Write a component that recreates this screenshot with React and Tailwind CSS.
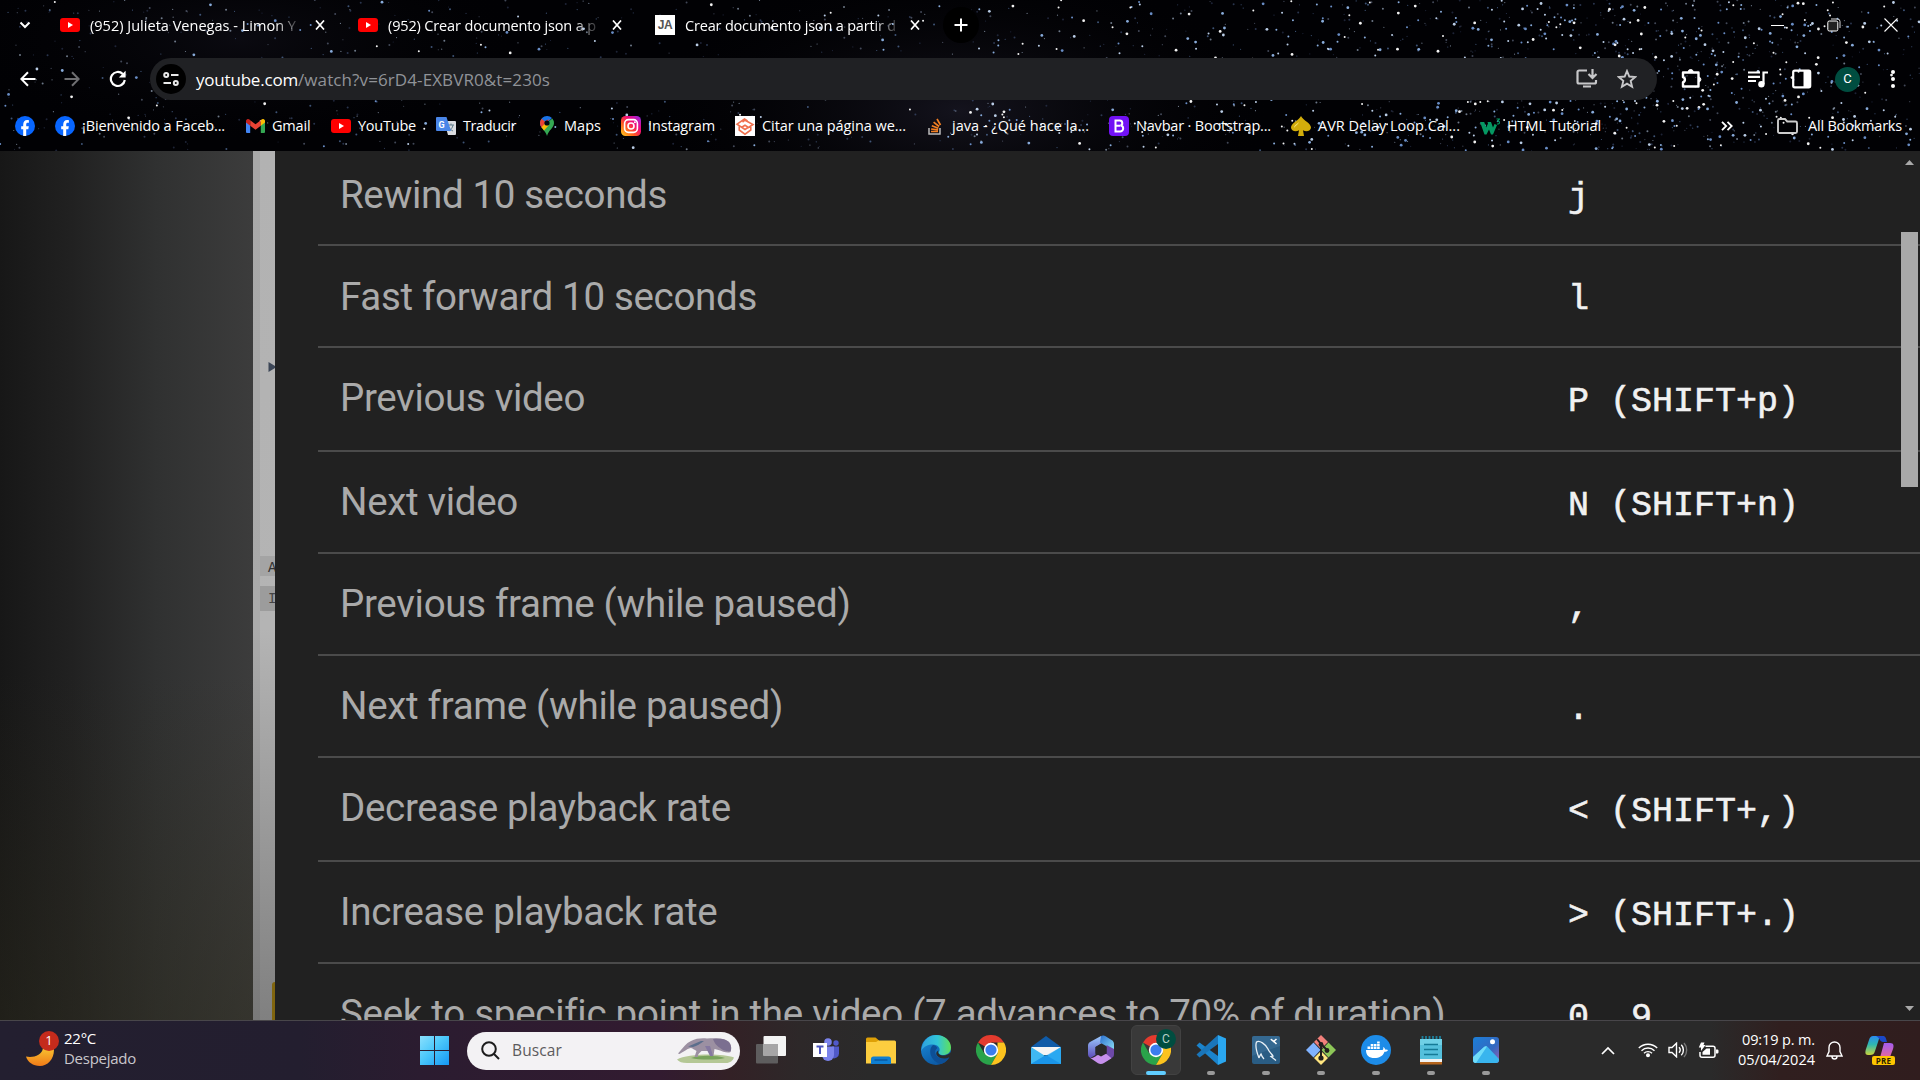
import React, { useLayoutEffect, useRef } from "react";

const UI = "font-['Open_Sans','Noto_Sans',sans-serif]";

/* Single line of text whose tracking is adjusted to fill a given width. */
function Fit({ w, className = "", children }) {
  const ref = useRef(null);
  useLayoutEffect(() => {
    const el = ref.current;
    el.style.letterSpacing = "0px";
    const natural = el.getBoundingClientRect().width;
    el.style.letterSpacing = (w - natural) / el.textContent.length + "px";
  }, [w]);
  return (
    <span ref={ref} className={"inline-block whitespace-nowrap " + className}>
      {children}
    </span>
  );
}

function makeStars() {
  let seed = 20240405;
  const rnd = () => {
    seed = (seed * 1664525 + 1013904223) % 4294967296;
    return seed / 4294967296;
  };
  const colors = ["#ffffff", "#8fb4e6", "#6f95d0", "#c4d8f2", "#4b5f88", "#34405f", "#77829a"];
  const out = [];
  for (let i = 0; i < 2100; i++) {
    let x = rnd() * 1920;
    const y = rnd() * 151;
    if (i < 480) x = 1640 + (rnd() + rnd() + rnd() - 1.5) * 260;
    else if (i < 900) x = 960 + rnd() * 960;
    if (x > 1920 || x < 0) continue;
    const t = rnd();
    const bright = x > 960 ? t < 0.42 : t < 0.16;
    const s = bright ? (rnd() < 0.4 ? 2.8 : 2) : rnd() < 0.4 ? 2 : 1.2;
    const c = bright ? colors[Math.floor(rnd() * 4)] : colors[2 + Math.floor(rnd() * 5)];
    out.push([x, y, s, c, bright ? 0.95 : 0.55]);
  }
  return out;
}
const STARS = makeStars();

function Sky() {
  return (
    <svg className="absolute inset-0 h-full w-full" viewBox="0 0 1920 151" preserveAspectRatio="none">
      <defs>
        <radialGradient id="neb">
          <stop offset="0" stopColor="#14131d" />
          <stop offset="1" stopColor="#000" stopOpacity="0" />
        </radialGradient>
      </defs>
      <rect width="1920" height="151" fill="#010104" />
      <ellipse cx="960" cy="110" rx="330" ry="150" fill="url(#neb)" />
      <ellipse cx="240" cy="40" rx="300" ry="110" fill="url(#neb)" opacity="0.5" />
      {STARS.map(([x, y, s, c, o], i) => (
        <ellipse key={i} cx={x} cy={y} rx={s / 2} ry={s / 2} fill={c} opacity={o} />
      ))}
    </svg>
  );
}

const YouTube = () => (
  <svg width="20" height="14" viewBox="0 0 20 14" className="shrink-0">
    <rect width="20" height="14" rx="3" fill="#f00" />
    <path d="M8 4v6l5-3z" fill="#fff" />
  </svg>
);
const CloseX = () => (
  <svg width="10" height="10" viewBox="0 0 10 10" className="shrink-0">
    <path d="M1 0.500l8 9M9 0.500L1 9.500" stroke="#fff" strokeWidth="1.700" />
  </svg>
);

const TABS = [
  { icon: <YouTube />, title: "(952) Julieta Venegas - Limon Y", w: 207, tw: 206, gap: 18, cell: 298 },
  { icon: <YouTube />, title: "(952) Crear documento json a p", w: 208, tw: 208, gap: 16, cell: 297 },
  {
    icon: (
      <span className="flex h-5 w-5 shrink-0 items-center justify-center bg-white font-['Liberation_Sans',sans-serif] text-[12px] font-bold tracking-tight text-[#555]">JA</span>
    ),
    title: "Crear documento json a partir d", w: 211, tw: 211, gap: 14, cell: 280,
  },
];

function TabStrip() {
  return (
    <div className={"flex h-[50px] items-center text-[14.5px] text-white " + UI}>
      <svg width="12" height="8" viewBox="0 0 12 8" className="ml-[19px] shrink-0">
        <path d="M1.5 1.5L6 6l4.500-4.500" fill="none" stroke="#fff" strokeWidth="2" />
      </svg>
      <div className="flex pl-[29px]">
        {TABS.map((t) => (
          <div key={t.title} className="flex items-center" style={{ width: t.cell }}>
            {t.icon}
            <div className="ml-[10px] shrink-0 overflow-hidden pt-px [mask-image:linear-gradient(to_right,#000_89%,rgba(0,0,0,0.2)_100%)]" style={{ width: t.w }}>
              <Fit w={t.tw}>{t.title}</Fit>
            </div>
            <span className="flex" style={{ marginLeft: t.gap }}><CloseX /></span>
          </div>
        ))}
      </div>
      <div className="ml-[8px] flex h-9 w-9 items-center justify-center rounded-full bg-black">
        <svg width="14" height="14" viewBox="0 0 14 14"><path d="M7 0.500v13M0.500 7h13" stroke="#fff" strokeWidth="2" /></svg>
      </div>
      <div className="ml-auto flex items-center pr-[22px]">
        <svg width="13" height="13" viewBox="0 0 13 13"><path d="M0 6.500h13" stroke="#fff" /></svg>
        <svg width="14" height="14" viewBox="0 0 14 14" className="ml-[43px]">
          <path d="M4 1h6.500a2.500 2.500 0 0 1 2.500 2.500V10" fill="none" stroke="#ddd" />
          <rect x="0.800" y="3" width="10" height="10" rx="1.500" fill="#222" stroke="#fff" />
        </svg>
        <svg width="14" height="14" viewBox="0 0 14 14" className="ml-[43px]"><path d="M0.500 0.500l13 13M13.500 0.500l-13 13" stroke="#fff" strokeWidth="1.100" /></svg>
      </div>
    </div>
  );
}

function Toolbar() {
  return (
    <div className="flex h-[58px] items-center">
      <svg width="16" height="16" viewBox="0 0 16 16" className="ml-5 shrink-0"><path d="M15.500 8H1.500M8 1.200L1.300 8 8 14.800" fill="none" stroke="#fff" strokeWidth="2" /></svg>
      <svg width="16" height="16" viewBox="0 0 16 16" className="ml-[28px] shrink-0"><path d="M0.500 8h14M8 1.200L14.700 8 8 14.800" fill="none" stroke="#6f6f72" strokeWidth="2" /></svg>
      <svg width="18" height="18" viewBox="0 0 18 18" className="ml-[29px] shrink-0">
        <path d="M15.800 10a7 7 0 1 1-2-6" fill="none" stroke="#fff" strokeWidth="2.200" />
        <path d="M16.600 0.800v6.800H9.800z" fill="#fff" />
      </svg>
      <div className="ml-[23px] flex h-[42px] w-[1507px] items-center rounded-full bg-[#202124]">
        <div className="ml-[6px] flex h-[30px] w-[30px] items-center justify-center rounded-full bg-black">
          <svg width="16" height="14" viewBox="0 0 16 14" fill="none" stroke="#e8e8e8" strokeWidth="2">
            <circle cx="3.200" cy="3" r="2" /><path d="M8 3h7.500M0.500 11H8" /><circle cx="12.800" cy="11" r="2" />
          </svg>
        </div>
        <div className={"ml-[10px] w-[360px] pt-[2px] whitespace-nowrap text-[17px] leading-[22px] text-[#909398] " + UI}>
          <Fit w={102} className="text-white">youtube.com</Fit>
          <Fit w={252}>/watch?v=6rD4-EXBVR0&amp;t=230s</Fit>
        </div>
        <svg width="22" height="20" viewBox="0 0 22 20" className="ml-auto shrink-0" fill="none" stroke="#c7c7c9" strokeWidth="2.200">
          <path d="M11 1.500H3a1.500 1.500 0 0 0-1.500 1.500v10A1.500 1.500 0 0 0 3 14.500h15.500a1.500 1.500 0 0 0 1.500-1.500v-2M7 17.500h8M16.500 0v8M12.500 5l4 4 4-4" />
        </svg>
        <svg width="20" height="20" viewBox="0 0 20 20" className="ml-[19px] mr-[20px] shrink-0" fill="none" stroke="#c7c7c9" strokeWidth="1.900">
          <path d="M10 2l2.300 5.500 5.900.5-4.500 3.900 1.400 5.800L10 14.600l-5.100 3.100 1.400-5.800L1.800 8l5.900-.5z" />
        </svg>
      </div>
      <svg width="22" height="22" viewBox="0 0 22 22" className="ml-[23px] shrink-0">
        <path d="M3 4.500h15.500v14H3v-4.300a2.600 2.600 0 0 0 0-5z" fill="none" stroke="#fff" strokeWidth="2.400" strokeLinejoin="round" />
        <path d="M8.200 4a2.500 2.500 0 0 1 5 0zM19 9a2.600 2.600 0 0 1 0 5z" fill="#fff" stroke="#fff" />
      </svg>
      <svg width="20" height="17" viewBox="0 0 20 17" className="ml-[46px] shrink-0">
        <path d="M0 1.500h12M0 5.800h12M0 10h8" stroke="#fff" strokeWidth="2.200" />
        <path d="M15.500 13V1.500H20" fill="none" stroke="#fff" strokeWidth="2.200" /><circle cx="13.400" cy="13.300" r="3.200" fill="#fff" />
      </svg>
      <svg width="20" height="20" viewBox="0 0 20 20" className="ml-[24px] shrink-0">
        <rect x="1.200" y="1.700" width="17" height="16.600" rx="1.500" fill="none" stroke="#fff" strokeWidth="2.200" /><path d="M11.500 1.500h7v17h-7z" fill="#fff" />
      </svg>
      <div className="ml-[23px] flex h-[25px] w-[25px] items-center justify-center rounded-full bg-[#004d40] font-[Roboto] text-[13px] text-white">C</div>
      <svg width="4" height="18" viewBox="0 0 4 18" className="ml-[31px] shrink-0" fill="#fff"><circle cx="2" cy="2" r="2" /><circle cx="2" cy="9" r="2" /><circle cx="2" cy="16" r="2" /></svg>
    </div>
  );
}

const Facebook = () => (
  <svg width="20" height="20" viewBox="0 0 20 20"><circle cx="10" cy="10" r="10" fill="#0866ff" /><path d="M8.200 20v-6.700H6.200v-3h2V8.700C8.200 5.600 9.800 4 12 4c.8 0 1.400.1 1.900.2v2.600h-1.200c-1.100 0-1.500.6-1.500 1.700v1.800h2.600l-.5 3h-2.100V20z" fill="#fff" /></svg>
);
const Gmail = () => (
  <svg width="19" height="14" viewBox="0 0 19 14"><path d="M0 2v11a1 1 0 0 0 1 1h3.200V5z" fill="#4285f4" /><path d="M19 2v11a1 1 0 0 1-1 1h-3.200V5z" fill="#34a853" /><path d="M14.800 1.200L9.500 5.200 4.200 1.200v5.600l5.300 4 5.300-4z" fill="#ea4335" /><path d="M0 2C0 .3 2 -.6 3.300.4l.9.700v5.700L0 3.600z" fill="#c5221f" /><path d="M19 2c0-1.700-2-2.600-3.300-1.600l-.9.700v5.700L19 3.600z" fill="#fbbc04" /></svg>
);
const Translate = () => (
  <svg width="20" height="20" viewBox="0 0 20 20"><path d="M8 5h11a1 1 0 0 1 1 1v12a1 1 0 0 1-1 1h-7z" fill="#dadce0" /><path d="M12 9h6M15 7.500V9m2 0c-.5 3-2 4.500-4 6m0-4c.8 2 2.500 3.400 4 4" stroke="#607d8b" fill="none" /><path d="M1 1h9.500l4.500 14H1a1 1 0 0 1-1-1V2a1 1 0 0 1 1-1z" fill="#4a86e8" /><text x="2.500" y="11.500" fontSize="9" fontWeight="700" fill="#fff" fontFamily="Roboto">G</text></svg>
);
const MapPin = () => (
  <svg width="14" height="20" viewBox="0 0 14 20"><path d="M7 0a7 7 0 0 0-7 7c0 2 .8 3.500 2 5l10-10A7 7 0 0 0 7 0z" fill="#1a73e8" /><path d="M0 7c0 2 .8 3.500 2 5l7.600-9L4.700 5.300 1.600 2.700A7 7 0 0 0 0 7z" fill="#ea4335" /><path d="M2 12l2.700-3.200L12.300 2.500A7 7 0 0 1 14 7c0 5-5.500 7-7 13-.5-3-3-5-5-8z" fill="#34a853" /><path d="M1.500 11.300L5 7.500l4 1.500-5 5.600z" fill="#fbbc04" /><circle cx="7" cy="7" r="2.600" fill="#000814" /></svg>
);
const Insta = () => (
  <svg width="20" height="20" viewBox="0 0 20 20"><defs><linearGradient id="ig" x1="0" y1="1" x2="1" y2="0"><stop offset="0" stopColor="#ffd521" /><stop offset=".35" stopColor="#ff5a1f" /><stop offset=".65" stopColor="#f0077c" /><stop offset="1" stopColor="#8a2ff5" /></linearGradient></defs><rect width="20" height="20" rx="4.500" fill="url(#ig)" /><rect x="3.600" y="3.600" width="12.800" height="12.800" rx="3.800" fill="none" stroke="#fff" strokeWidth="1.600" /><circle cx="10" cy="10" r="3" fill="none" stroke="#fff" strokeWidth="1.600" /><circle cx="13.900" cy="6.200" r="1" fill="#fff" /></svg>
);
const Scribbr = () => (
  <svg width="20" height="20" viewBox="0 0 20 20"><rect width="20" height="20" fill="#fff" /><path d="M7.500 6L10 4.200 18 8.500 13.500 11.500 10 9.300 6.800 11.300M12.500 5L9.500 3 2 8.200 10 13.500 13 11.500M4.200 10.500V14L10 18.200 15.800 14V11" fill="none" stroke="#f0714f" strokeWidth="1.600" /></svg>
);
const StackO = () => (
  <svg width="15" height="18" viewBox="0 0 15 18"><path d="M1 11v6h11v-6" fill="none" stroke="#bcbbbb" strokeWidth="1.500" /><path d="M3 14.500h7M3.100 12l7 .9M3.800 8.800l6.600 2.500M5.600 5.200l5.500 4.300M9 2l3.500 6" stroke="#f48024" strokeWidth="1.700" /></svg>
);
const Boot = () => (
  <svg width="20" height="20" viewBox="0 0 20 20"><rect width="20" height="20" rx="4" fill="#7211f5" /><path d="M6.500 4.500h4.300a2.600 2.600 0 0 1 .6 5.100 2.900 2.900 0 0 1-.4 5.900H6.500zM6.500 9.700h4.500" fill="none" stroke="#fff" strokeWidth="2" /></svg>
);
const Spade = () => (
  <svg width="20" height="20" viewBox="0 0 20 20"><path d="M10 0c2 4.500 10 7 10 11.500 0 3.500-5 5-8 2.700L13 20H7l1-5.800C5 16.500 0 15 0 11.500 0 7 8 4.500 10 0z" fill="#d3ad0b" /><path d="M8 6c-3 2.500-5 3.500-5 6 2-3 4-3 5-6z" fill="#f6e37a" /></svg>
);
const W3 = () => (
  <svg width="20" height="17" viewBox="0 0 20 17"><path d="M0 4h4.200l2 5.500L8 5.500 7.500 4H11l2 5.500L14.500 6l2.500 1-4 9.500h-2L9 11.500 6.500 16.500h-2z" fill="#059862" /><path d="M16.500 1h3l-1.700 2c2.500 0 2.500 3.500-.8 3" fill="none" stroke="#059862" strokeWidth="1.100" /></svg>
);

const MARKS = [
  { icon: <Facebook />, cell: 40, iw: 20 },
  { icon: <Facebook />, text: "¡Bienvenido a Faceb...", cell: 191, iw: 20, tw: 143 },
  { icon: <Gmail />, text: "Gmail", cell: 85, iw: 19, tw: 38.500 },
  { icon: <YouTube />, text: "YouTube", cell: 105, iw: 20, tw: 58 },
  { icon: <Translate />, text: "Traducir", cell: 101, iw: 20, tw: 53 },
  { icon: <MapPin />, text: "Maps", cell: 84, iw: 20, tw: 37 },
  { icon: <Insta />, text: "Instagram", cell: 114, iw: 20, tw: 67 },
  { icon: <Scribbr />, text: "Citar una página we...", cell: 190, iw: 20, tw: 144 },
  { icon: <StackO />, text: "java - ¿Qué hace la...", cell: 184, iw: 20, tw: 137 },
  { icon: <Boot />, text: "Navbar · Bootstrap...", cell: 182, iw: 20, tw: 135 },
  { icon: <Spade />, text: "AVR Delay Loop Cal...", cell: 189, iw: 20, tw: 142 },
  { icon: <W3 />, text: "HTML Tutorial", cell: 160, iw: 20, tw: 94 },
];

function Bookmarks() {
  return (
    <div className={"flex h-[36px] items-center pl-[15px] text-[14.5px] text-white " + UI}>
      {MARKS.map((m, i) => (
        <div key={i} className="flex shrink-0 items-center" style={{ width: m.cell }}>
          <span className="flex shrink-0 justify-center" style={{ width: m.iw }}>{m.icon}</span>
          {m.text && <Fit w={m.tw} className="ml-[7px]">{m.text}</Fit>}
        </div>
      ))}
      <div className="ml-auto flex items-center pr-[18px]">
        <svg width="12" height="10" viewBox="0 0 12 10" className="mr-[44px]"><path d="M1 .8L5.200 5 1 9.200M6.500.8L10.700 5 6.500 9.200" fill="none" stroke="#fff" strokeWidth="1.800" /></svg>
        <svg width="21" height="16" viewBox="0 0 21 16" className="mr-[10px]"><path d="M1 2.500A1.500 1.500 0 0 1 2.500 1H8l2.200 2.500h8.300A1.500 1.500 0 0 1 20 5v8.500a1.500 1.500 0 0 1-1.500 1.500h-16A1.500 1.500 0 0 1 1 13.500z" fill="none" stroke="#ccc" strokeWidth="1.900" /></svg>
        <Fit w={94}>All Bookmarks</Fit>
      </div>
    </div>
  );
}

const ROWS = [
  ["Rewind 10 seconds", "j", 327, "h-[95px] pt-[22px]", "pt-[3px]"],
  ["Fast forward 10 seconds", "l", 417, "h-[102px] pt-[29px]", "pt-[3px]"],
  ["Previous video", "P (SHIFT+p)", 245, "h-[104px] pt-[28px]", "pt-[4px]"],
  ["Next video", "N (SHIFT+n)", 178, "h-[102px] pt-[28px]", "pt-[4px]"],
  ["Previous frame (while paused)", ",", 510.5, "h-[102px] pt-[28px]", "pt-[4px]"],
  ["Next frame (while paused)", ".", 443, "h-[102px] pt-[28px]", "pt-[4px]"],
  ["Decrease playback rate", "< (SHIFT+,)", 391, "h-[104px] pt-[28px]", "pt-[4px]"],
  ["Increase playback rate", "> (SHIFT+.)", 377.5, "h-[102px] pt-[28px]", "pt-[4px]"],
  ["Seek to specific point in the video (7 advances to 70% of duration)", "0..9", 1104, "h-[102px] pt-[28px]", "pt-[4px]"],
];

function Shortcuts() {
  return (
    <div className="flex min-w-0 grow flex-col bg-[#212121] pl-[43px]">
      {ROWS.map(([label, key, w, rowClass, keyClass], i) => (
        <div key={label} className={"flex shrink-0 items-start " + rowClass + (i < 8 ? " border-b-2 border-[#4b4b4b]" : "")}>
          <div className="w-[1250px] shrink-0 pl-[22px] font-[Roboto,sans-serif] text-[38.500px] leading-[44px] text-[#aaa]">
            <Fit w={w}>{label}</Fit>
          </div>
          <div className={"font-['Liberation_Mono',monospace] text-[35px] leading-[44px] whitespace-pre text-[#f1f1f1] [-webkit-text-stroke:0.600px_#f1f1f1] " + keyClass}>
            {key}
          </div>
        </div>
      ))}
    </div>
  );
}

function Page() {
  return (
    <div className="relative flex h-[869px] overflow-hidden">
      <div className="w-[253px] shrink-0 bg-[linear-gradient(to_bottom,rgba(52,50,34,0)_60%,rgba(44,42,28,0.450)_100%),linear-gradient(to_right,#171717,#212121_28%,#303131_62%,#3c3c3c)]" />
      <div className="relative w-[22px] shrink-0 overflow-hidden bg-[linear-gradient(to_bottom,#b2b2b2,#b4b4b4_55%,#808080_100%)]">
        <div className="h-full w-[7px] bg-black/5" />
        <svg className="absolute top-[210px] left-[15px]" width="7" height="12"><path d="M0.500 1v10L7 7V5z" fill="#3c4657" /></svg>
        <div className="absolute top-[405px] left-[7px] h-5 w-[15px] overflow-hidden bg-[#a4a4a4] pl-2 font-['Liberation_Mono',monospace] text-[14px] leading-[24px] text-[#333]">A</div>
        <div className="absolute top-[435px] left-[7px] h-[25px] w-[15px] overflow-hidden bg-[#9c9c9c] pl-2 font-['Liberation_Mono',monospace] text-[14px] leading-[27px] text-[#444]">I</div>
        <div className="absolute bottom-0 left-[19px] h-[38px] w-[3px] rounded-tl bg-[#80650f]" />
      </div>
      <Shortcuts />
      <div className="absolute inset-y-0 right-[2px] flex w-[17px] flex-col items-center">
        <svg width="9" height="5" viewBox="0 0 9 5" className="mt-[9px]"><path d="M0 5L4.500 0 9 5z" fill="#a9a9a9" /></svg>
        <div className="mt-[67px] h-[255px] w-[17px] bg-[#a9a9a9]" />
        <svg width="9" height="5" viewBox="0 0 9 5" className="mt-auto mb-[9px]"><path d="M0 0l4.500 5L9 0z" fill="#a9a9a9" /></svg>
      </div>
    </div>
  );
}

/* ---------- taskbar ---------- */
const Chrome = () => (
  <svg width="30" height="30" viewBox="0 0 30 30">
    <path d="M15 15L2 7.500A15 15 0 0 1 28 7.500H15z" fill="#e33b2e" />
    <path d="M2 7.500a15 15 0 0 0 13 22.500l6.500-11.300L15 15 8.500 18.700z" fill="#2aa34a" />
    <path d="M28 7.500A15 15 0 0 1 15 30l6.500-11.200V7.500z" fill="#fcc31e" />
    <circle cx="15" cy="15" r="7.200" fill="#fff" /><circle cx="15" cy="15" r="5.600" fill="#3b7ded" />
  </svg>
);
const Edge = () => (
  <svg width="30" height="30" viewBox="0 0 30 30">
    <defs><linearGradient id="e1" x1="0" x2="1"><stop offset="0" stopColor="#2f9fe0" /><stop offset=".55" stopColor="#31c5d8" /><stop offset="1" stopColor="#5fe05a" /></linearGradient><linearGradient id="e2" x1="0" y1="0" x2="0.500" y2="1"><stop offset="0" stopColor="#1b8fdc" /><stop offset="1" stopColor="#0c59a4" /></linearGradient></defs>
    <circle cx="15" cy="15" r="15" fill="url(#e2)" />
    <path d="M1 12C3 4 9 0 15 0c9 0 15 6 15 12.500 0 5-4 7.500-8 7.500-3 0-5-1.500-4-3 2-3-.5-7.500-6-7.500C7 9.500 3 11 0 16z" fill="url(#e1)" />
    <path d="M12 10c-4 3-5 14 7 19 5-1 8-4 9.500-7-5 3-12 2-14-3-1-3 .5-5 2-6-1-2-3-3-4.500-3z" fill="#0d4f96" />
    <path d="M17.500 15.500c-1.500 2.500 1 5 5 5 3.500 0 6-1.500 8-4v6.500l-2-1c-4 2.500-10 2-12.500-1.500-1.500-2-.5-4 1.500-5z" fill="#2b2b2b" />
  </svg>
);
const Mail = () => (
  <svg width="30" height="28" viewBox="0 0 30 28"><path d="M0 11L15 0l15 11z" fill="#0f5ba8" /><path d="M0 11h30l-8 8H8z" fill="#f4f4f4" /><path d="M0 11l15 9.500L30 11v17H0z" fill="#3fb8f2" /><path d="M0 28l15-9L30 28z" fill="#1c8fe0" /><path d="M0 28L30 11v17z" fill="#1a9af0" opacity=".55" /></svg>
);
const M365 = () => (
  <svg width="28" height="30" viewBox="0 0 28 30"><defs><linearGradient id="m1" x1="0" y1="0" x2="0" y2="1"><stop offset="0" stopColor="#9ccbff" /><stop offset="1" stopColor="#5c4bb8" /></linearGradient><linearGradient id="m2" x1="0" y1="0" x2="1" y2="1"><stop offset="0" stopColor="#2a6fd0" /><stop offset="1" stopColor="#8de0f5" /></linearGradient></defs>
    <path d="M14 1L3 7C1.500 8 1 9 1 11v8c0 2 .8 3 2.500 4l5-3V12l8-5z" fill="url(#m1)" />
    <path d="M14 1c2-1 3-.5 5 .5l5.500 3.500c2 1 2.500 2.500 2.500 4.500v6l-7-4-7-4z" fill="url(#m2)" />
    <path d="M27 14v5c0 2-.5 3-2.500 4L19 26.500l-6-3.500 6.500-4v-9z" fill="#6d49a8" />
    <path d="M3 22.700c2.500 1 5-1 7-2.500l9-1.500 5.500 4.500-7.500 4.800c-2 1.300-4 1.300-6 .3z" fill="#c690ec" />
    <path d="M14 9l5.500 3v6.500L14 21.500 8.500 18.500V12z" fill="#292929" />
  </svg>
);
const VSCode = () => (
  <svg width="30" height="30" viewBox="0 0 30 30"><path d="M22 30L.5 10.500l3-3L22 21z" fill="#1b84cc" /><path d="M22 0L.5 19.500l3 3L22 9z" fill="#1a76ba" /><path d="M22 0l8 3.500v23L22 30z" fill="#2aa7f0" /></svg>
);
const MySQL = () => (
  <svg width="28" height="28" viewBox="0 0 28 28"><rect width="28" height="28" rx="2" fill="#2a5d84" /><path d="M0 2a2 2 0 0 1 2-2h24a2 2 0 0 1 2 2v8L0 20z" fill="#3e7299" opacity=".6" /><path d="M7 22C5 17 3 10 4.500 6c3-2 9 2 11.500 7 1 3 4 5 5 7l-2 .5 5 4M7 22c1-2 1-3 2-4 1 3 2 4 3 5" fill="none" stroke="#e8f0f6" strokeWidth="1.300" /><path d="M19 3c1 2 2 1.500 3 2.500l2.500 2.500M21 6l3.500-3" stroke="#fff" strokeWidth="1.600" fill="none" /></svg>
);
const Git = () => (
  <svg width="30" height="30" viewBox="0 0 30 30"><path d="M15 0l7 7-7 7-7-7z" fill="#f1807b" /><path d="M7.500 7.500l7 7.500-7 7.500L0 15z" fill="#80b3ff" /><path d="M22.500 7.500L30 15l-7.500 7.500-7-7.500z" fill="#8dc658" /><path d="M15 16l7 7-7 7-7-7z" fill="#ffe680" /><path d="M11 4l4 5v14M15 9l6 6" stroke="#221f1f" strokeWidth="2" fill="none" /><circle cx="15" cy="9.500" r="2.400" fill="#221f1f" /><circle cx="21" cy="15.500" r="2.400" fill="#221f1f" /><circle cx="15" cy="23" r="2.600" fill="#221f1f" /></svg>
);
const Docker = () => (
  <svg width="30" height="30" viewBox="0 0 30 30"><circle cx="15" cy="15" r="15" fill="#1d8ce8" /><path d="M5 15h16.500c1-.5 1-2 .5-3 1.500.5 2 1.500 2 2.500 1.500-.3 2.500 0 3 .5-.7 1.500-2 1.800-3.500 1.800C22 21.500 18 23 13.500 23 8 23 5 20.500 5 15z" fill="#fff" /><g fill="#fff"><path d="M6.500 11.500h2.600V14H6.500zM9.700 11.500h2.600V14H9.700zM12.900 11.500h2.600V14h-2.600zM16.100 11.500h2.600V14h-2.600zM9.700 9h2.600v2H9.700zM12.900 9h2.600v2h-2.600zM16.100 9h2.600v2h-2.600zM16.100 6.500h2.600v2h-2.600z" /></g></svg>
);
const Notepad = () => (
  <svg width="22" height="30" viewBox="0 0 22 30"><path d="M0 4h22v20H0z" fill="#55c0dc" /><path d="M0 4h22v6H0z" fill="#6fd0e6" /><path d="M0 24h22v3H0z" fill="#f2f2f2" /><path d="M0 27h22v2.500H0z" fill="#b5651d" /><path d="M2.500 1v3M6 1v3M9.500 1v3M13 1v3M16.500 1v3M20 1v3" stroke="#1b7e9b" strokeWidth="1.800" /><path d="M4 9.500h14M4 14.500h14M4 19.500h14" stroke="#157a96" strokeWidth="1.500" /></svg>
);
const Photos = () => (
  <svg width="26" height="26" viewBox="0 0 26 26"><defs><linearGradient id="p1" x1="0" y1="0" x2="1" y2="1"><stop offset="0" stopColor="#1b7fd8" /><stop offset=".6" stopColor="#3468c0" /><stop offset="1" stopColor="#9a5fb0" /></linearGradient></defs><rect width="26" height="26" rx="3" fill="url(#p1)" /><path d="M0 20L11 10c1.200-1 2.500-1 3.700 0L26 22v1a3 3 0 0 1-3 3H3a3 3 0 0 1-3-3z" fill="#39b5ee" /><path d="M0 20L11 10c1-1 2-1 3-.5L3 26c-2 0-3-1-3-3z" fill="#6fdcfa" /><circle cx="19.500" cy="4.800" r="2.500" fill="#fff" /></svg>
);
const TaskView = () => (
  <svg width="30" height="28" viewBox="0 0 30 28"><rect y="8" width="22" height="19.500" rx="1" fill="#5e5d5e" /><rect x="7.500" width="22.500" height="20" rx="1" fill="#f3f3f3" /><rect x="7.500" y="8" width="14.500" height="12" fill="#a6a5a6" /></svg>
);
const Teams = () => (
  <svg width="27" height="24" viewBox="0 0 27 24"><circle cx="15" cy="4" r="3.800" fill="#7b83eb" /><circle cx="23" cy="5" r="2.700" fill="#5059c9" /><path d="M19 8.500h7v7a5 5 0 0 1-7 4.500z" fill="#5059c9" /><path d="M9 8.500h12V17a6 6 0 0 1-12 0z" fill="#7b83eb" /><rect y="5" width="14" height="14" fill="#fff" /><path d="M3.500 8.500h7M7 8.500V16" stroke="#4b53bc" strokeWidth="2" /></svg>
);
const Folder = () => (
  <svg width="30" height="27" viewBox="0 0 30 27"><path d="M0 2a1.500 1.500 0 0 1 1.500-1.500h8L13 3.500h0V8H0z" fill="#dea006" /><path d="M0 5h10l2.500-1.500H28.500A1.500 1.500 0 0 1 30 5v21.500H0z" fill="#fccd3f" /><path d="M5 27v-5a2.500 2.500 0 0 1 2.500-2.500h15A2.500 2.500 0 0 1 25 22v5z" fill="#0f7fd2" /><path d="M8.500 23h13" stroke="#0a4f93" strokeWidth="1.200" /></svg>
);
const Windows = () => (
  <svg width="29" height="29" viewBox="0 0 29 29"><defs><linearGradient id="w1" x1="0" y1="0" x2="1" y2="1"><stop offset="0" stopColor="#8be0fd" /><stop offset=".45" stopColor="#4cc8fb" /><stop offset="1" stopColor="#1597f4" /></linearGradient></defs><path d="M0 0h14v14H0zM15 0h14v14H15zM0 15h14v14H0zM15 15h14v14H15z" fill="url(#w1)" /></svg>
);
const Anteater = () => (
  <svg width="57" height="25" viewBox="0 0 57 25"><path d="M0 21.500C10 15.500 45 15 57 19.500c-1 3-4 5.500-8 5.500H10C5 25 2 24 0 21.500z" fill="#b4c795" /><path d="M14 20c8-3 26-3 34 0-8 2-26 2-34 0z" fill="#5f9445" opacity=".7" /><path d="M1 15.500C6 10 9 5 14 3c5-2.500 10-3 16-2.500 10-1 20 0 22.500 4 2 3 2 7 1 9.500-3 1.500-8-.5-12-2l-4-1-1 7h-3l-2-5-7 0-3 3-1 3h-3l2-6c-2-1-4-3-6-3-4 1-7 4-11 6z" fill="#9c90a2" /><path d="M36 1c8-1 14 0 16.500 4 2 3 2 6 1 8.500-1-.5-2 .5-3-.5-1 .5-2-.5-3-.500-1 0-2-1-3-1.500-5-3-7-6-8.500-10z" fill="#7b6f90" /><path d="M11 8.500L24 3l3 0c-4 3-7 5-11 6z" fill="#5b6e8c" /><path d="M28 8l5 0 3 10h-3z" fill="#8578a0" /></svg>
);

const APPS = [
  { el: <TaskView /> }, { el: <Teams /> }, { el: <Folder /> }, { el: <Edge /> }, { el: <Chrome /> }, { el: <Mail /> }, { el: <M365 /> },
  { el: <Chrome />, active: true }, { el: <VSCode />, run: true }, { el: <MySQL />, run: true }, { el: <Git />, run: true },
  { el: <Docker />, run: true }, { el: <Notepad />, run: true }, { el: <Photos />, run: true },
];

function Taskbar() {
  return (
    <div className={"flex h-[60px] items-center border-t border-[#48464a] bg-[linear-gradient(to_right,#231f30_0px,#231e2f_300px,#2b1c30_420px,#321b30_660px,#332126_730px,#2d2829_800px,#2a2a2a_870px,#2a2a2a_1710px,#301f1f_1780px,#301d1e_1920px)] " + UI}>
      <div className="flex w-[393px] shrink-0 items-center pb-[5px] pl-[26px]">
        <div className="relative h-[35px] w-[34px]">
          <svg width="28" height="18" viewBox="0 0 28 18" className="absolute bottom-0 left-0"><defs><linearGradient id="mo" x1="0" y1="0" x2="0" y2="1"><stop offset="0" stopColor="#f8c330" /><stop offset="1" stopColor="#f07a18" /></linearGradient></defs><path d="M0 8.500c7 1.500 16-1 17-8.500h10.800C29 10 22 18 14 18 7 18 1.500 14 0 8.500z" fill="url(#mo)" /></svg>
          <div className="absolute top-0 left-[13px] flex h-5 w-5 items-center justify-center rounded-full bg-[#c42b1c] text-[13px] text-white">1</div>
        </div>
        <div className="ml-[4px] flex flex-col text-[15px] leading-5">
          <Fit w={32} className="self-start text-white">22°C</Fit>
          <Fit w={72} className="self-start text-[#c9c7cc]">Despejado</Fit>
        </div>
      </div>
      <div className="ml-[27px]"><Windows /></div>
      <div className="ml-[18px] flex h-[38px] w-[273px] shrink-0 items-center rounded-full bg-[#f3f2f4] pr-[6px] pl-[14px]">
        <svg width="19" height="19" viewBox="0 0 19 19" fill="none" stroke="#1c1c1c" strokeWidth="2"><circle cx="8" cy="8" r="6.800" /><path d="M13 13l5 5" /></svg>
        <Fit w={50} className="ml-[12px] pt-px text-[15.500px] text-[#5c5b5d]">Buscar</Fit>
        <span className="ml-auto"><Anteater /></span>
      </div>
      <div className="ml-[3.500px] flex h-full">
        {APPS.map((a, i) => (
          <div key={i} className="relative flex w-[55px] items-center justify-center pb-px">
            {a.active && <div className="absolute top-[4px] left-[2.500px] h-[50px] w-[50px] rounded-md border border-[#424242] bg-[#393939]" />}
            <div className="relative">
              {a.el}
              {a.active && (
                <div className="absolute -top-[6px] left-[15px] flex h-5 w-5 items-center justify-center rounded-full bg-[#004d40] font-[Roboto] text-[12px] text-[#b7cfca]">C</div>
              )}
            </div>
            {a.active && <div className="absolute bottom-[5px] h-[4px] w-5 rounded-full bg-[#60cdff]" />}
            {a.run && <div className="absolute bottom-[5px] h-[4px] w-2 rounded-full bg-[#9a9a9a]" />}
          </div>
        ))}
      </div>
      <div className="ml-auto flex shrink-0 items-center pr-[25px] pb-px">
        <svg width="14" height="9" viewBox="0 0 14 9"><path d="M1 8l6-6 6 6" fill="none" stroke="#fff" strokeWidth="1.700" /></svg>
        <svg width="20" height="16" viewBox="0 0 20 16" className="ml-[23px]" fill="none" stroke="#fff" strokeWidth="1.400"><path d="M0.800 6a13 13 0 0 1 18.400 0M3.500 8.700a9.200 9.200 0 0 1 13 0M6 11.300a5.600 5.600 0 0 1 8 0" /><circle cx="10" cy="13.300" r="1.300" fill="#fff" /></svg>
        <svg width="20" height="16" viewBox="0 0 20 16" className="ml-[10px]" fill="none" stroke="#fff" strokeWidth="1.400"><path d="M1 5.500h3L8.500 1.200v13.600L4 10.500H1zM11 5.300a4 4 0 0 1 0 5.400M13.300 2.800a7.500 7.500 0 0 1 0 10.400" /><path d="M16 1a10.500 10.500 0 0 1 0 14" stroke="#777" /></svg>
        <svg width="21" height="17" viewBox="0 0 21 17" className="ml-[10px]"><path d="M7.500 4.200h7.500a2 2 0 0 1 2 2v7a2 2 0 0 1-2 2H4a2 2 0 0 1-2-2V10" fill="none" stroke="#fff" strokeWidth="1.500" /><path d="M18 7.500h1c1 0 1.500.5 1.500 1.300v1.400c0 .8-.5 1.300-1.500 1.300h-1zM4.500 12.700V10L8.500 6.500h3.500v6.200zM3 0.500h3.500L5.500 3h2L3 9V5.500H0.800z" fill="#fff" /></svg>
        <div className="ml-[19px] flex w-[77px] flex-col items-end pb-px text-[14.500px] leading-5 text-white">
          <Fit w={73}>09:19 p. m.</Fit>
          <Fit w={77}>05/04/2024</Fit>
        </div>
        <svg width="17" height="19" viewBox="0 0 17 19" className="ml-[11px]" fill="none" stroke="#fff" strokeWidth="1.400"><path d="M8.500 1a5.500 5.500 0 0 0-5.500 5.500v4L1 15h15l-2-4.500v-4A5.500 5.500 0 0 0 8.500 1zM6 15.500a2.500 2.500 0 0 0 5 0" /></svg>
        <div className="relative ml-[22px] h-[29px] w-[30px]">
          <svg width="29" height="24" viewBox="0 0 29 24"><defs><linearGradient id="c1" x1="0" y1="0" x2="0" y2="1"><stop offset="0" stopColor="#2a8cf0" /><stop offset=".45" stopColor="#2fb8b0" /><stop offset="1" stopColor="#c8d43c" /></linearGradient><linearGradient id="c2" x1="0" y1="0" x2="0" y2="1"><stop offset="0" stopColor="#a35cf0" /><stop offset="1" stopColor="#f26a8a" /></linearGradient></defs><path d="M8 0h9c-2 0-3 2-4 6l-3 9c-1 3-2 4-5 4H3c-3 0-3-3-2-6L4 4c1-3 2-4 4-4z" fill="url(#c1)" /><path d="M11 0h7c2 0 3 1.500 4 6h-4c-3 0-3-4-7-6z" fill="#1b48c8" /><path d="M19 7h6c4 0 4 3 3 6l-3 8c-1 2-2 3-4 3h-9c2 0 3-2 4-6z" fill="url(#c2)" /></svg>
          <div className="absolute right-0 bottom-0 flex h-[9px] w-[23px] items-center justify-center rounded-[2px] bg-[#fdc500] text-[8px] leading-[9px] font-bold tracking-wide text-[#2a2200]">PRE</div>
        </div>
      </div>
    </div>
  );
}

export default function App() {
  return (
    <div className="h-[1080px] w-[1920px] overflow-hidden bg-black">
      <div className="relative h-[151px] overflow-hidden">
        <Sky />
        <div className="relative">
          <TabStrip />
          <Toolbar />
          <Bookmarks />
        </div>
      </div>
      <Page />
      <Taskbar />
    </div>
  );
}
